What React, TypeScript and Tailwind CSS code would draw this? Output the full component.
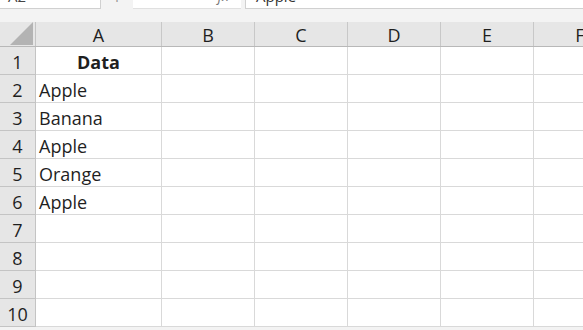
import React from "react";

const cols = ["A", "B", "C", "D", "E", "F"];
const widths = [126, 93, 93, 93, 93, 93];
const data: Record<number, string> = {
  2: "Apple",
  3: "Banana",
  4: "Apple",
  5: "Orange",
  6: "Apple",
};

const App: React.FC = () => {
  return (
    <div
      className="w-[583px] h-[330px] overflow-hidden bg-[#f3f3f3] text-[#1f1f1f]"
      style={{ fontFamily: '"Open Sans", "Noto Sans", sans-serif' }}
    >
      {/* Formula bar (cut off at the top) */}
      <div className="h-[9px] overflow-hidden flex items-end">
        <div className="flex items-end h-[26px] shrink-0 w-full">
          <div className="w-[101px] h-[26px] bg-white border-b border-r border-[#d0d0d0] px-2 text-[15px] leading-[26px] text-[#444]">
            A2
          </div>
          <div className="w-[32px] text-center text-[12px] text-[#9a9a9a] leading-[26px]">⋮</div>
          <div className="w-[108px] h-[26px] bg-white border-b border-[#e0e0e0] flex items-center justify-around text-[14px] text-[#b0b0b0] leading-[26px]">
            <span>✕</span>
            <span>✓</span>
            <span className="italic text-[#777]">fx</span>
          </div>
          <div className="ml-[4px] flex-1 h-[26px] bg-white border-b border-l border-[#d0d0d0] px-[10px] text-[15px] leading-[26px] text-[#333]">
            Apple
          </div>
        </div>
      </div>
      <div className="h-[13px]" />

      {/* Column headers */}
      <div className="flex h-[25px] bg-[#e6e6e6] border-b border-[#b8b8b8]">
        <div className="w-[36px] shrink-0 relative border-r border-[#c4c4c4]">
          <svg className="absolute right-[2px] bottom-[1px]" width="23" height="23" viewBox="0 0 23 23">
            <polygon points="23,0 23,23 0,23" fill="#b3b3b3" />
          </svg>
        </div>
        {cols.map((c, i) => (
          <div
            key={c}
            style={{ width: widths[i] }}
            className="shrink-0 border-r border-[#c8c8c8] flex items-center justify-center text-[18px] leading-none pt-[1px]"
          >
            {c}
          </div>
        ))}
      </div>

      {/* Rows */}
      {Array.from({ length: 10 }, (_, r) => r + 1).map((r) => (
        <div key={r} className="flex h-[28px]">
          <div className="w-[36px] shrink-0 bg-[#e6e6e6] border-r border-b border-[#c4c4c4] flex items-center justify-center text-[18px] leading-none pt-[2px]">
            {r}
          </div>
          {cols.map((c, i) => (
            <div
              key={c}
              style={{ width: widths[i] }}
              className={`shrink-0 bg-white border-r border-b border-[#d9d9d9] flex items-center text-[18px] leading-none pt-[2px] ${
                r === 1 && i === 0 ? "justify-center font-bold" : "pl-[3px]"
              }`}
            >
              {i === 0 ? (r === 1 ? "Data" : data[r] ?? "") : ""}
            </div>
          ))}
        </div>
      ))}
    </div>
  );
};

export default App;
